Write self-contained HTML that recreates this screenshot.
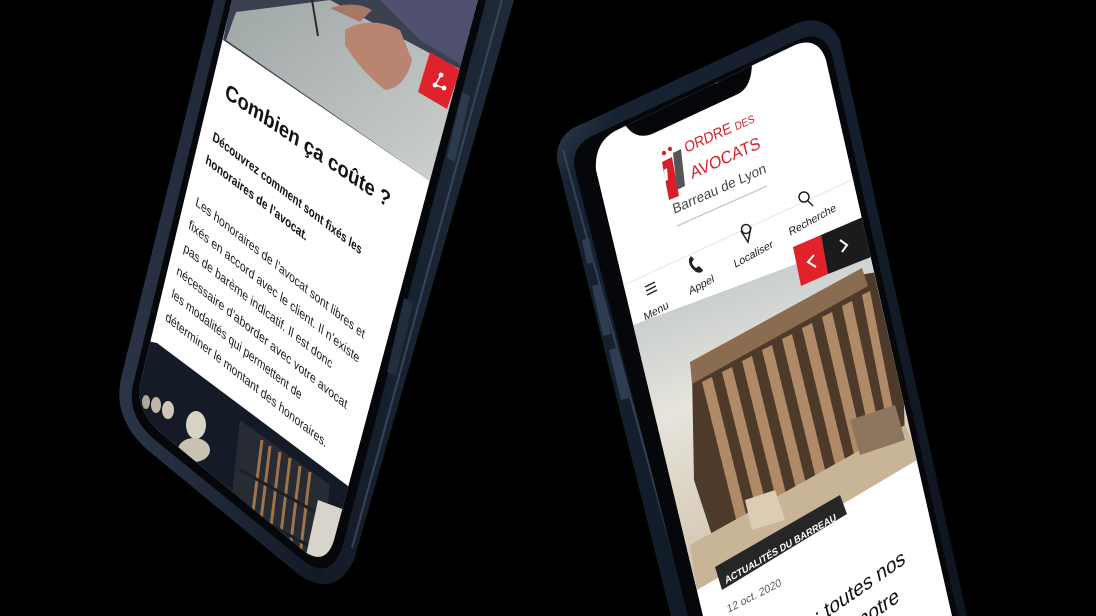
<!DOCTYPE html>
<html><head><meta charset="utf-8"><style>
html,body{margin:0;padding:0;background:#000;width:1096px;height:616px;overflow:hidden}
svg{display:block}
text{font-family:"Liberation Sans",sans-serif}
</style></head><body>
<svg width="1096" height="616" viewBox="0 0 1096 616" xmlns="http://www.w3.org/2000/svg">
<defs>
<linearGradient id="frameL" x1="0" y1="0" x2="1" y2="0">
<stop offset="0" stop-color="#2a3547"/><stop offset="0.5" stop-color="#121a26"/><stop offset="1" stop-color="#1f2a3a"/></linearGradient>
<linearGradient id="frameR" x1="0" y1="0" x2="1" y2="1">
<stop offset="0" stop-color="#4a5b70"/><stop offset="0.15" stop-color="#172232"/><stop offset="1" stop-color="#0e1520"/></linearGradient>
<linearGradient id="sky" x1="0" y1="0" x2="0.3" y2="1">
<stop offset="0" stop-color="#a9b6bf"/><stop offset="0.5" stop-color="#e6e4dc"/><stop offset="1" stop-color="#cdbda2"/></linearGradient>
<linearGradient id="paper" x1="0" y1="0" x2="1" y2="1">
<stop offset="0" stop-color="#9ea6a6"/><stop offset="1" stop-color="#cfd3d0"/></linearGradient>
<clipPath id="dispR"><path d="M596,170 Q594,143 615,131 L795,45 Q818,36 826,60 L952,616 L703,616 Z"/></clipPath>
<clipPath id="imgR"><polygon points="633,325 866,238 917,460 697,590"/></clipPath>
<clipPath id="dispL"><path d="M232,0 L140,385 Q136,410 160,432 L305,552 Q326,566 334,540 L478,0 Z"/></clipPath>
</defs>

<!-- ============ LEFT PHONE ============ -->
<path d="M214,0 L121,378 Q112,420 150,452 L298,574 Q335,600 354,560 L514,0 Z" fill="url(#frameL)"/>
<path d="M502,0 L352,548" stroke="#3e4f66" stroke-width="2" fill="none" opacity="0.8"/>
<path d="M226,0 L133,385 Q126,415 155,440 L305,562 Q330,580 342,548 L486,0 Z" fill="#05070a"/>
<path d="M462,92 L470,96 L455,162 L447,158 Z" fill="#2c3a4e"/>
<path d="M404,298 L413,302 L396,376 L387,372 Z" fill="#222d3d"/>
<g clip-path="url(#dispL)">
<rect x="100" y="0" width="400" height="600" fill="#fff"/>
<polygon points="232,-2 480,-2 430,181 223,40" fill="#3b4150"/>
<polygon points="236,12 330,0 480,80 430,181 226,40" fill="url(#paper)"/>
<polygon points="380,0 480,0 470,70 420,40" fill="#4f5070"/>
<path d="M345,30 Q370,15 400,30 L412,60 Q405,88 385,90 Q360,70 345,45 Z" fill="#b98570"/>
<path d="M330,8 Q355,0 372,10 L360,22 Z" fill="#a87866"/>
<path d="M312,0 L318,36" stroke="#2a2a2a" stroke-width="2"/>
<polygon points="430,52 460,70 447,109 418,92" fill="#e0222b"/>
<g stroke="#fff" stroke-width="1.6" fill="#fff">
<line x1="435" y1="85" x2="441" y2="75"/><line x1="435" y1="85" x2="444" y2="88"/>
<circle cx="435" cy="85" r="1.6"/><circle cx="441" cy="75" r="1.6"/><circle cx="444" cy="88" r="1.6"/></g>
<text transform="matrix(0.83 0.56 -0.24 0.97 224 97)" font-size="21" font-weight="bold" fill="#111" textLength="198" lengthAdjust="spacingAndGlyphs">Combien ça coûte ?</text>
<text transform="matrix(0.79 0.61 -0.24 0.97 212 140)" font-size="13" font-weight="bold" fill="#111" textLength="188" lengthAdjust="spacingAndGlyphs">Découvrez comment sont fixés les</text>
<text transform="matrix(0.79 0.61 -0.24 0.97 205 163)" font-size="13" font-weight="bold" fill="#111" textLength="128" lengthAdjust="spacingAndGlyphs">honoraires de l’avocat.</text>
<g font-size="13" fill="#1a1a1a">
<text transform="matrix(0.78 0.62 -0.24 0.97 195 205)" textLength="216" lengthAdjust="spacingAndGlyphs">Les honoraires de l’avocat sont libres et</text>
<text transform="matrix(0.78 0.62 -0.24 0.97 188 228)" textLength="218" lengthAdjust="spacingAndGlyphs">fixés en accord avec le client. Il n’existe</text>
<text transform="matrix(0.78 0.62 -0.24 0.97 183 251)" textLength="190" lengthAdjust="spacingAndGlyphs">pas de barème indicatif. Il est donc</text>
<text transform="matrix(0.78 0.62 -0.24 0.97 176 274)" textLength="218" lengthAdjust="spacingAndGlyphs">nécessaire d’aborder avec votre avocat</text>
<text transform="matrix(0.78 0.62 -0.24 0.97 171 297)" textLength="166" lengthAdjust="spacingAndGlyphs">les modalités qui permettent de</text>
<text transform="matrix(0.78 0.62 -0.24 0.97 165 320)" textLength="206" lengthAdjust="spacingAndGlyphs">déterminer le montant des honoraires.</text>
</g>
<polygon points="157,343 360,495 340,620 90,620 90,330" fill="#141b27"/>
<polygon points="240,420 330,485 315,600 225,560" fill="#262b34"/>
<g stroke="#a0744a" stroke-width="3">
<line x1="262" y1="440" x2="252" y2="520"/><line x1="270" y1="446" x2="260" y2="528"/>
<line x1="280" y1="452" x2="270" y2="535"/><line x1="290" y1="458" x2="280" y2="542"/>
<line x1="300" y1="466" x2="290" y2="550"/><line x1="310" y1="472" x2="300" y2="556"/>
</g>
<g stroke="#1a1f28" stroke-width="3"><line x1="240" y1="470" x2="330" y2="520"/><line x1="234" y1="505" x2="326" y2="555"/></g>
<ellipse cx="196" cy="425" rx="10" ry="14" fill="#d8d2c4"/>
<ellipse cx="194" cy="450" rx="16" ry="12" fill="#c9c2b2"/>
<ellipse cx="168" cy="410" rx="6" ry="9" fill="#cfc8b8"/>
<ellipse cx="156" cy="405" rx="5" ry="8" fill="#bfb8a8"/>
<ellipse cx="146" cy="402" rx="4" ry="7" fill="#aea898"/>
<polygon points="318,500 345,510 335,570 305,560" fill="#d8d4cc"/>
</g>

<!-- ============ RIGHT PHONE ============ -->
<path d="M557,160 Q556,133 582,124 L795,24 Q826,12 840,40 L967,616 L671,616 Z" fill="url(#frameR)"/>
<path d="M563,150 L690,616" stroke="#3a4b62" stroke-width="2" opacity="0.8"/>
<path d="M574,166 Q573,145 592,136 L800,39 Q824,30 832,55 L958,616 L688,616 Z" fill="#05070a"/>
<path d="M582,240 L589,238 L594,262 L587,264 Z" fill="#2e3d52"/>
<path d="M592,286 L600,284 L611,334 L603,336 Z" fill="#2e3d52"/>
<path d="M609,350 L617,348 L629,398 L621,400 Z" fill="#2e3d52"/>
<g clip-path="url(#dispR)">
<rect x="580" y="20" width="400" height="600" fill="#fff"/>
<path d="M626,126 Q636,140 652,134 L738,94 Q752,87 752,62 L626,115 Z" fill="#05070a"/>
<circle cx="716" cy="82" r="2" fill="#2a3f8a"/>
<polygon points="662,162 672,157 679,196 669,200" fill="#d81f29"/>
<polygon points="664,170 667,168 668,180 665,181" fill="#fff"/>
<polygon points="673,153 681,149 685,186 677,190" fill="#555"/>
<circle cx="664" cy="153" r="2.2" fill="#d81f29"/>
<circle cx="670" cy="149" r="2.2" fill="#d81f29"/>
<text transform="matrix(0.91 -0.41 0.24 0.97 686 153)" font-size="15" fill="#d81f29" textLength="76" lengthAdjust="spacingAndGlyphs">ORDRE <tspan font-size="11">DES</tspan></text>
<text transform="matrix(0.91 -0.41 0.24 0.97 692 179)" font-size="17" fill="#d81f29" textLength="76" lengthAdjust="spacingAndGlyphs">AVOCATS</text>
<text transform="matrix(0.91 -0.41 0.24 0.97 674 214)" font-size="14" fill="#444" textLength="102" lengthAdjust="spacingAndGlyphs">Barreau de Lyon</text>
<line x1="677" y1="226" x2="767" y2="186" stroke="#bbb" stroke-width="1"/>
<line x1="620" y1="287" x2="860" y2="176" stroke="#e6e6e6" stroke-width="1"/>
<g stroke="#222" stroke-width="1.5" fill="none">
<line x1="645" y1="287" x2="655" y2="282"/><line x1="646" y1="291" x2="656" y2="286"/><line x1="647" y1="295" x2="657" y2="290"/>
<circle cx="746" cy="229" r="4.5"/><path d="M741,231 L748,242 L751,227"/>
<circle cx="804" cy="197" r="5"/><line x1="808" y1="201" x2="813" y2="206"/>
</g>
<path d="M689,259 Q688,266 696,272 Q702,274 703,270 L699,266 L696,268 Q692,265 692,262 L694,259 L691,256 Z" fill="#222"/>
<g font-size="11" fill="#1a1a1a">
<text transform="matrix(0.878 -0.479 0.24 0.97 645 321)">Menu</text>
<text transform="matrix(0.878 -0.479 0.24 0.97 690 295)">Appel</text>
<text transform="matrix(0.878 -0.479 0.24 0.97 735 268)">Localiser</text>
<text transform="matrix(0.878 -0.479 0.24 0.97 790 236)">Recherche</text>
</g>
<g clip-path="url(#imgR)">
<rect x="600" y="220" width="340" height="400" fill="url(#sky)"/>
<polygon points="692,372 860,275 900,268 905,440 720,560 694,480" fill="#4e3a2a"/>
<polygon points="690,362 862,268 868,286 692,384" fill="#8a6c50"/>
<g fill="#b08a66">
<polygon points="702,382 712,377 750,530 740,535"/>
<polygon points="722,372 732,367 770,520 760,525"/>
<polygon points="742,361 752,356 790,510 780,515"/>
<polygon points="762,350 772,345 810,500 800,505"/>
<polygon points="782,339 792,334 830,490 820,495"/>
<polygon points="802,328 812,323 850,480 840,485"/>
<polygon points="822,317 832,312 868,467 858,472"/>
<polygon points="842,306 852,301 885,455 875,460"/>
<polygon points="862,295 870,291 900,445 892,449"/>
</g>
<polygon points="690,545 905,425 925,470 700,610" fill="#c8b496"/>
<polygon points="745,500 775,490 785,520 752,530" fill="#dccdb2"/>
<polygon points="850,420 895,405 905,440 860,455" fill="#8d7560"/>
</g>
<polygon points="793,247 821,235 828,274 801,286" fill="#e0222b"/>
<polygon points="821,235 870,214 876,255 828,274" fill="#1b1b1b"/>
<path d="M814,255 L808,262 L816,267" stroke="#fff" stroke-width="2" fill="none"/>
<path d="M840,240 L847,245 L842,252" stroke="#fff" stroke-width="2" fill="none"/>
<polygon points="715,567 840,495 847,514 722,590" fill="#262626"/>
<text transform="matrix(0.865 -0.5 0.24 0.97 726 584)" font-size="10" font-weight="bold" fill="#fff" textLength="128" lengthAdjust="spacingAndGlyphs">ACTUALITÉS DU BARREAU</text>
<text transform="matrix(0.89 -0.455 0.24 0.97 728 613)" font-size="11" fill="#555">12 oct. 2020</text>
<text transform="matrix(0.82 -0.57 0.24 0.97 906 563)" font-size="21" fill="#111" text-anchor="end">Elizabeth : toutes nos</text>
<text transform="matrix(0.82 -0.57 0.24 0.97 900 601)" font-size="21" fill="#111" text-anchor="end">avec notre</text>
</g>
</svg>
</body></html>
